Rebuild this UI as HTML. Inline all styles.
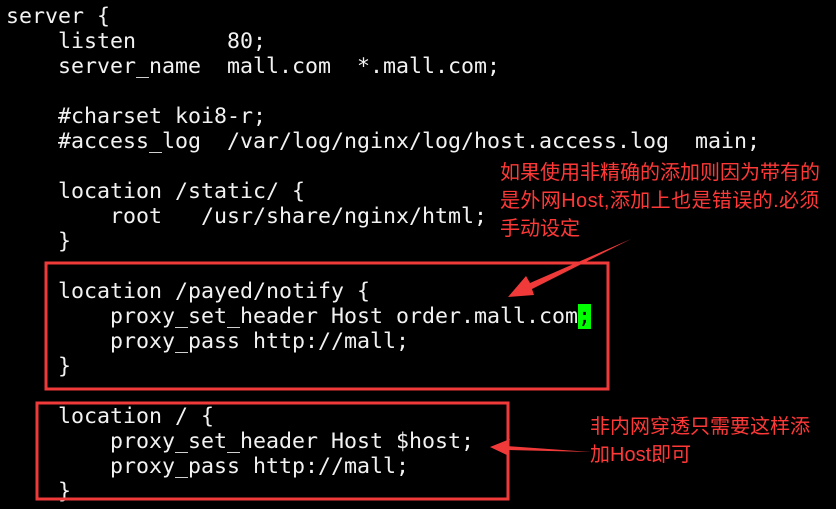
<!DOCTYPE html>
<html><head><meta charset="utf-8"><style>
html,body{margin:0;padding:0;background:#000;width:836px;height:509px;overflow:hidden;position:relative}
pre{position:absolute;left:6px;top:4px;margin:0;font-family:"DejaVu Sans Mono","Liberation Mono",monospace;font-size:21.6px;line-height:25px;color:#f2f2f2}
.cur{background:#00ff00;color:#000}
.n{position:absolute;font-family:"Liberation Sans","Noto Sans CJK SC",sans-serif;font-size:20px;line-height:28px;color:#ff3838;white-space:nowrap}
svg{position:absolute;left:0;top:0}
</style></head><body>
<pre>server {
    listen       80;
    server_name  mall.com  *.mall.com;

    #charset koi8-r;
    #access_log  /var/log/nginx/log/host.access.log  main;

    location /static/ {
        root   /usr/share/nginx/html;
    }

    location /payed/notify {
        proxy_set_header Host order.mall.com<span class="cur">;</span>
        proxy_pass http://mall;
    }

    location / {
        proxy_set_header Host $host;
        proxy_pass http://mall;
    }</pre>
<div class="n" style="left:500px;top:159px">如果使用非精确的添加则因为带有的<br><span style="letter-spacing:0.4px">是外网Host,添加上也是错误的.必须</span><br>手动设定</div>
<div class="n" style="left:590px;top:413px">非内网穿透只需要这样添<br>加Host即可</div>
<svg width="836" height="509">
<rect x="46" y="263" width="562" height="126" fill="none" stroke="#f03a3a" stroke-width="3"/>
<rect x="37" y="403" width="471" height="96" fill="none" stroke="#f03a3a" stroke-width="3"/>
<polygon points="631,239 530,283 526,276 508,297 534,295 532,289" fill="#f03a3a"/>
<polygon points="591,452 507,446 510,439 490,447 509,456 507,450" fill="#f03a3a"/>
</svg>
</body></html>
